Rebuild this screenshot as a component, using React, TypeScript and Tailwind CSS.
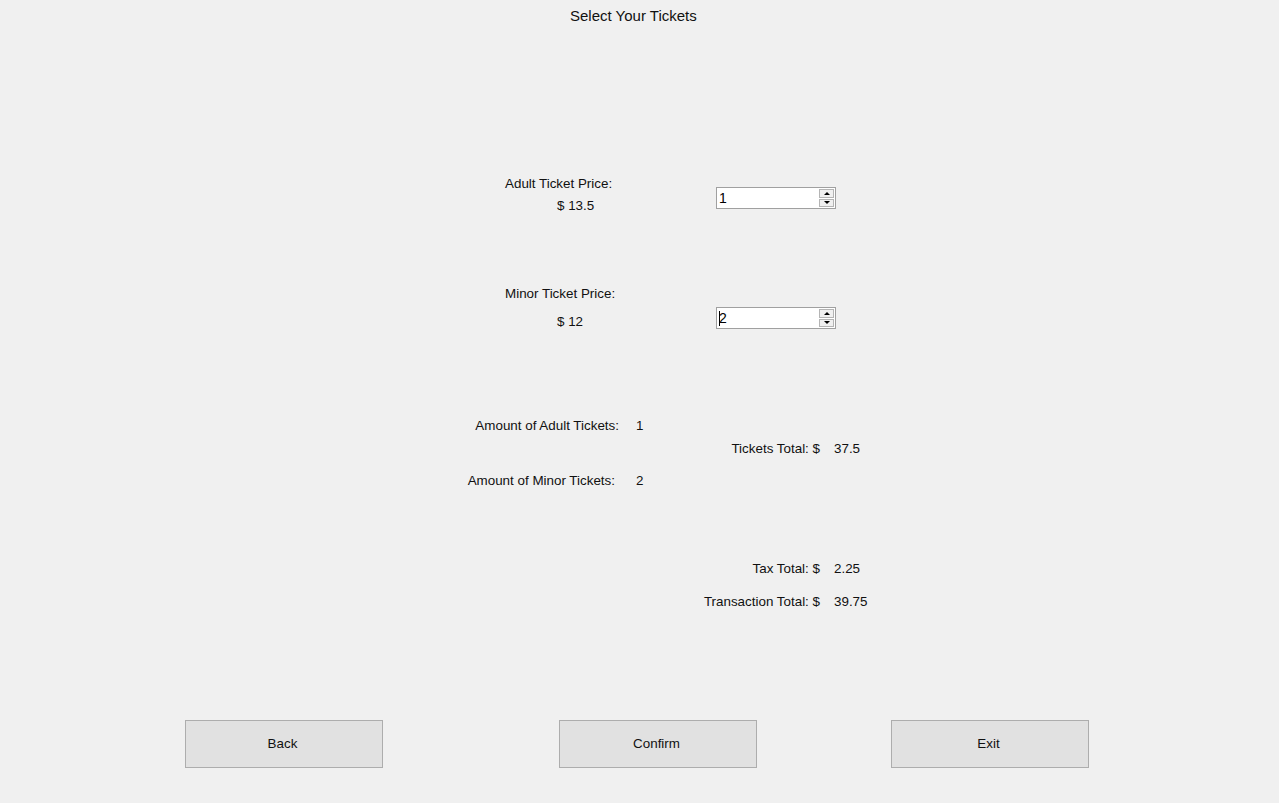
import React from 'react';

const font = { fontFamily: "'Liberation Sans', Arial, sans-serif" };

function Spinner({ value, caret = false }: { value: string; caret?: boolean }) {
  return (
    <div className="flex h-[22px] w-[120px] items-center border border-[#a0a0a0] bg-white pl-[2px] pr-[1px]">
      <div className="flex flex-1 items-center text-[14px] leading-[16px] text-black">
        {caret && <span className="mr-[-1px] inline-block h-[15px] w-px bg-black" />}
        {value}
      </div>
      <div className="flex h-[18px] w-[15px] flex-col gap-px">
        <div className="flex h-[8.5px] flex-1 items-center justify-center border border-[#b4b4b4] bg-[#f0f0f0]">
          <div className="h-0 w-0 border-x-[3px] border-b-[3px] border-x-transparent border-b-black" />
        </div>
        <div className="flex h-[8.5px] flex-1 items-center justify-center border border-[#b4b4b4] bg-[#f0f0f0]">
          <div className="h-0 w-0 border-x-[3px] border-t-[3px] border-x-transparent border-t-black" />
        </div>
      </div>
    </div>
  );
}

function TotalLine({ label, value, className }: { label: string; value: string; className: string }) {
  return (
    <div className={`flex h-[15px] leading-[15px] ${className}`}>
      <div className="w-[820px] text-right">{label}</div>
      <div className="ml-[14px]">{value}</div>
    </div>
  );
}

export default function App() {
  return (
    <div className="h-[803px] w-full overflow-hidden bg-[#f0f0f0] text-[13.4px] text-[#111]" style={font}>
      {/* Title */}
      <div className="pl-[570px] pt-[7px] text-[15px] leading-[17px]">Select Your Tickets</div>

      {/* Adult price */}
      <div className="mt-[152px] flex pl-[505px]">
        <div className="w-[211px]">
          <div className="h-[15px] leading-[15px]">Adult Ticket Price:</div>
          <div className="mt-[7px] h-[15px] pl-[52px] leading-[15px]">$ 13.5</div>
        </div>
        <div className="mt-[11px]">
          <Spinner value="1" />
        </div>
      </div>

      {/* Minor price */}
      <div className="mt-[73px] flex pl-[505px]">
        <div className="w-[211px]">
          <div className="h-[15px] leading-[15px]">Minor Ticket Price:</div>
          <div className="mt-[13px] h-[15px] pl-[52px] leading-[15px]">$ 12</div>
        </div>
        <div className="mt-[21px]">
          <Spinner value="2" caret />
        </div>
      </div>

      {/* Amounts */}
      <div className="mt-[89px] flex h-[15px] leading-[15px]">
        <div className="w-[619px] text-right">Amount of Adult Tickets:</div>
        <div className="ml-[17px]">1</div>
      </div>
      <TotalLine label="Tickets Total: $" value="37.5" className="mt-[8px]" />
      <div className="mt-[17px] flex h-[15px] leading-[15px]">
        <div className="w-[615px] text-right">Amount of Minor Tickets:</div>
        <div className="ml-[21px]">2</div>
      </div>

      <TotalLine label="Tax Total: $" value="2.25" className="mt-[73px]" />
      <TotalLine label="Transaction Total: $" value="39.75" className="mt-[18px]" />

      {/* Buttons */}
      <div className="mt-[111px] flex pl-[185px]">
        <button className="h-[48px] w-[198px] border border-[#adadad] bg-[#e1e1e1] pt-px pr-[3px] text-[13.4px]">Back</button>
        <button className="ml-[176px] h-[48px] w-[198px] border border-[#adadad] bg-[#e1e1e1] pt-px pr-[3px] text-[13.4px]">Confirm</button>
        <button className="ml-[134px] h-[48px] w-[198px] border border-[#adadad] bg-[#e1e1e1] pt-px pr-[3px] text-[13.4px]">Exit</button>
      </div>
    </div>
  );
}
